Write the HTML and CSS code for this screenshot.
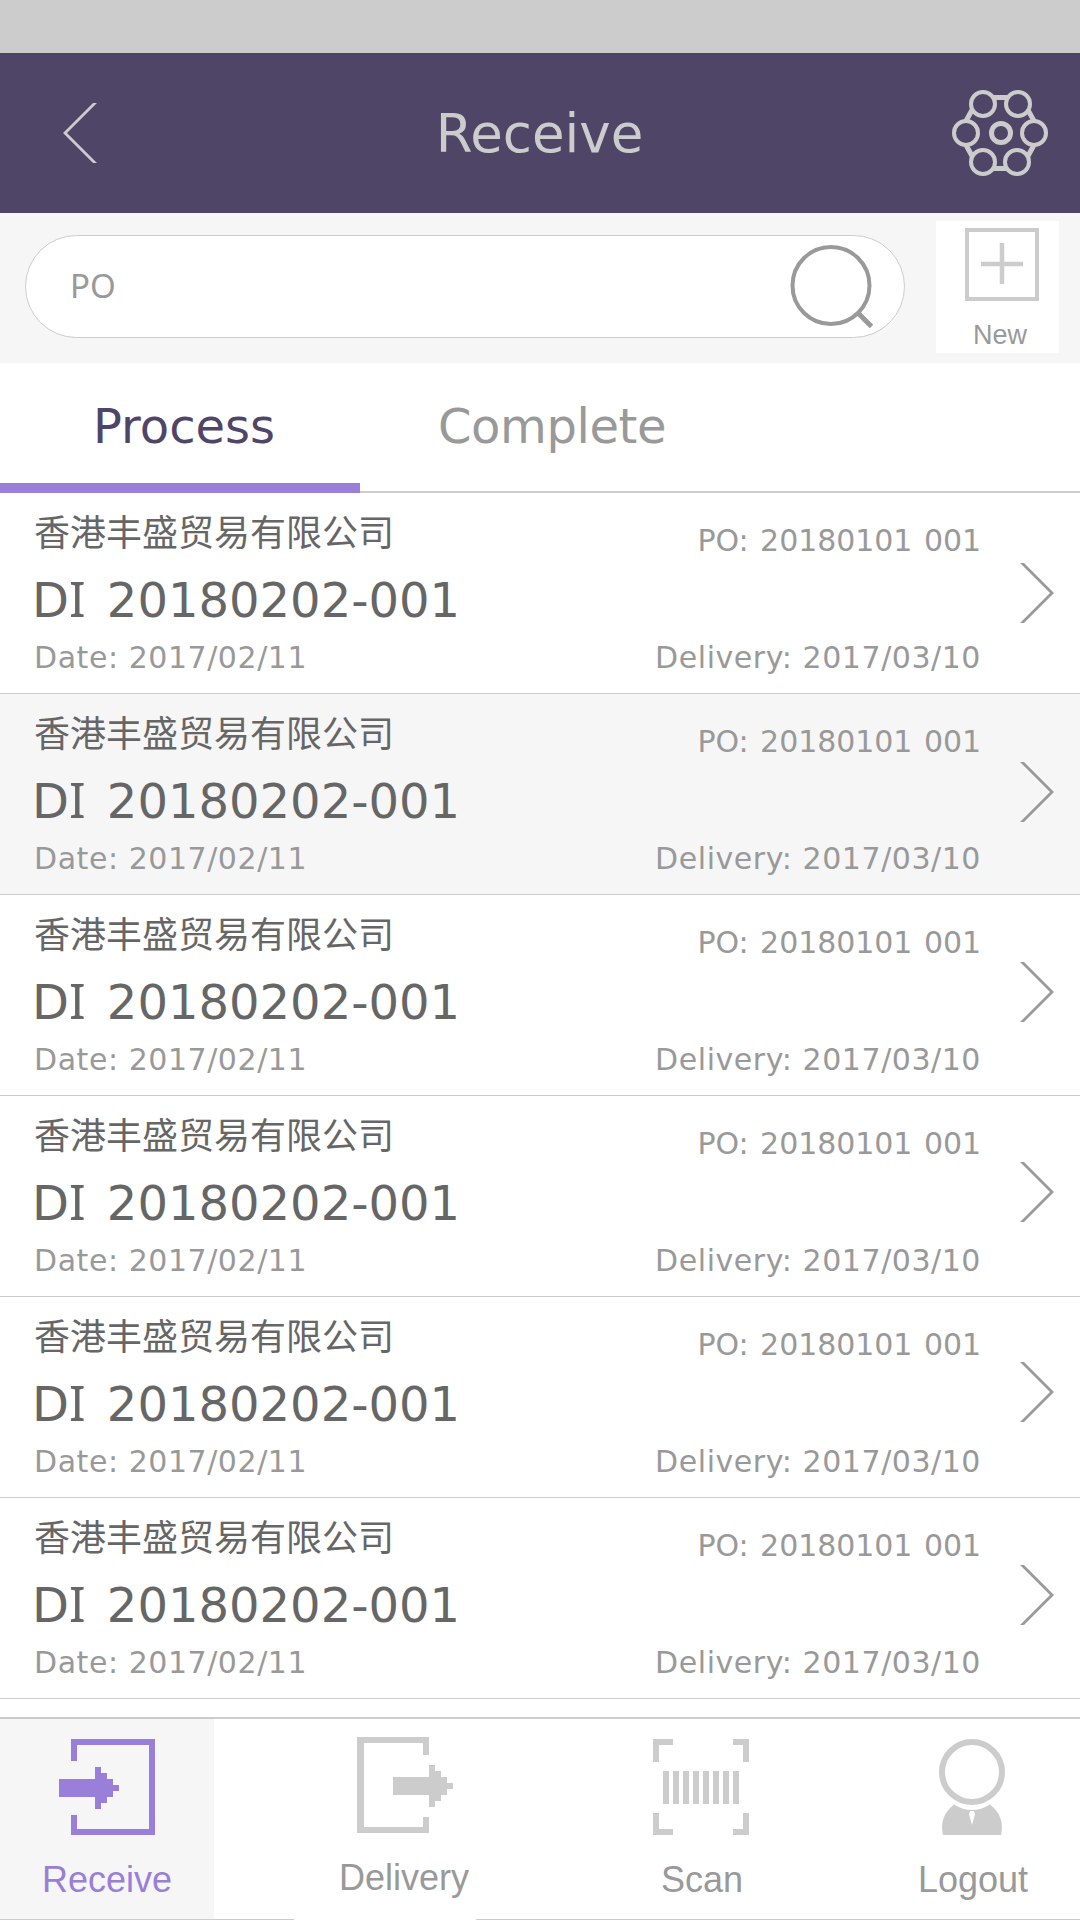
FILE: index.html
```html
<!DOCTYPE html>
<html lang="en">
<head>
  <meta charset="UTF-8" />
  <meta name="viewport" content="width=device-width, initial-scale=1.0">
  <title>Receive</title>
  <link rel="stylesheet" href="styles.css">
</head>
<body>
  <div class="status-bar"></div>

  <header class="header">
    <svg class="back" width="34" height="60" viewBox="0 0 34 60">
      <path d="M33 -1 L2 30 L33 61" />
    </svg>
    <h1>Receive</h1>
    <svg class="settings" width="96" height="86" viewBox="0 0 96 86">
      <path d="M41 7.500h14M76 20l6 11M82 55l-6 11M41 78.500h14M20 66l-6-11M14 31l6-11" stroke-width="5" />
      <circle cx="31" cy="14" r="12" />
      <circle cx="66" cy="14" r="12" />
      <circle cx="14" cy="43" r="12" />
      <circle cx="82" cy="43" r="12" />
      <circle cx="31" cy="72" r="12" />
      <circle cx="65" cy="72" r="12" />
      <circle cx="49" cy="43" r="9.500" stroke-width="5" />
    </svg>
  </header>

  <div class="search-row">
    <div class="search-box">
      <span>PO</span>
      <svg width="84" height="84" viewBox="0 0 84 84">
        <circle cx="41" cy="40.500" r="38.500" />
        <path d="M67 67 L81.500 81.500" stroke-width="5" />
      </svg>
    </div>
    <div class="new-btn">
      <svg width="74" height="74" viewBox="0 0 74 74">
        <path d="M2 2h70v69H2z" stroke-width="4" />
        <path d="M37 15v41M16 36h42" stroke-width="4.500" />
      </svg>
      <span>New</span>
    </div>
  </div>

  <div class="tabs">
    <div class="tab active"><span class="process">Process</span></div>
    <div class="tab"><span class="complete">Complete</span></div>
  </div>

  <div class="order-list" id="order-list"></div>

  <nav class="bottom-nav">
    <div class="nav-item receive active">
      <svg width="96" height="96" viewBox="0 0 96 96">
        <path d="M12 0h84v96H12V76h6v14h72V6H18v16h-6z" />
        <path d="M0 40h36V28h6v6h6v6h6v6h6v6h-6v6h-6v6h-6v6h-6V58H0z" />
      </svg>
      <span>Receive</span>
    </div>
    <div class="nav-item delivery">
      <svg width="96" height="96" viewBox="0 0 96 96">
        <path d="M0 0h72v18h-6V6H7v84h59V80h6v16H0z" />
        <path d="M36 40h36V28h6v6h6v6h6v6h6v6h-6v6h-6v6h-6v6h-6V58H36z" />
      </svg>
      <span>Delivery</span>
    </div>
    <div class="nav-item scan">
      <svg width="96" height="96" viewBox="0 0 96 96">
        <path d="M0 0h20v6H6v17H0zM80 0h16v23h-6V6H80zM0 74h6v16h14v6H0zM90 74h6v22H80v-6h10z" />
        <path d="M10 32h6v33h-6zM20 32h6v33h-6zM30 32h6v33h-6zM40 32h6v33h-6zM50 32h6v33h-6zM60 32h6v33h-6zM70 32h6v33h-6zM80 32h6v33h-6z" />
      </svg>
      <span>Scan</span>
    </div>
    <div class="nav-item logout">
      <svg width="66" height="96" viewBox="0 0 66 96">
        <circle cx="33" cy="33" r="30" fill="none" stroke="#ccc" stroke-width="6" />
        <path d="M15 65.500Q33 76.500 51 65.500C61 73 65 84 62 96H4C1 84 5 73 15 65.500z" />
        <path d="M31 72h4l1 3-3 11-3-11z" fill="#fff" />
      </svg>
      <span>Logout</span>
    </div>
  </nav>

  <script>
    const orders = [
      { company: '香港丰盛贸易有限公司', di: '20180202-001', po: '20180101 001', date: '2017/02/11', delivery: '2017/03/10' },
      { company: '香港丰盛贸易有限公司', di: '20180202-001', po: '20180101 001', date: '2017/02/11', delivery: '2017/03/10', selected: true },
      { company: '香港丰盛贸易有限公司', di: '20180202-001', po: '20180101 001', date: '2017/02/11', delivery: '2017/03/10' },
      { company: '香港丰盛贸易有限公司', di: '20180202-001', po: '20180101 001', date: '2017/02/11', delivery: '2017/03/10' },
      { company: '香港丰盛贸易有限公司', di: '20180202-001', po: '20180101 001', date: '2017/02/11', delivery: '2017/03/10' },
      { company: '香港丰盛贸易有限公司', di: '20180202-001', po: '20180101 001', date: '2017/02/11', delivery: '2017/03/10' }
    ];

    const list = document.getElementById('order-list');
    for (const o of orders) {
      const div = document.createElement('div');
      div.className = o.selected ? 'order selected' : 'order';
      div.innerHTML = `
        <div class="order-left">
          <div class="company">${o.company}</div>
          <div class="di">D<span class="serif-i">I</span> ${o.di}</div>
          <div class="small date">Date: ${o.date}</div>
        </div>
        <div class="order-right">
          <div class="small po">PO: ${o.po}</div>
          <div class="small date">Delivery: ${o.delivery}</div>
        </div>
        <svg class="arrow" width="34" height="60" viewBox="0 0 34 60">
          <path d="M1 -1 L32 30 L1 61" />
        </svg>
      `;
      list.appendChild(div);
    }
  </script>
</body>
</html>
```

FILE: styles.css
```css
* {
  box-sizing: border-box;
}
body {
  margin: 0;
  width: 1080px;
  height: 1920px;
  overflow: hidden;
  display: flex;
  flex-direction: column;
  background: #fff;
  color: #999;
  font-family: "DejaVu Sans", "Noto Sans CJK SC", sans-serif;
}
svg {
  display: block;
  flex: none;
}
.status-bar {
  height: 53px;
  background: #ccc;
}
.header {
  height: 160px;
  background: #4f4567;
  color: #ccc;
  display: flex;
  align-items: center;
  justify-content: space-between;
  padding: 0 32px 0 63px;
}
.header svg {
  fill: none;
  stroke: #ccc;
  stroke-width: 4;
}
.header .back {
  stroke-width: 2.8;
}
h1 {
  margin: 2px 0 0 30px;
  font-size: 53px;
  font-weight: normal;
  line-height: 60px;
}
.search-row {
  height: 150px;
  background: #f6f6f6;
  display: flex;
  padding: 8px 21px 0 25px;
  justify-content: space-between;
}
.search-box {
  width: 880px;
  height: 103px;
  margin-top: 14px;
  border: 1px solid #ccc;
  border-radius: 52px;
  background: #fff;
  display: flex;
  justify-content: space-between;
  padding: 9px 30px 0 44px;
}
.search-box span {
  font-family: "Noto Sans", sans-serif;
  font-size: 33px;
  line-height: 82px;
}
.search-box svg {
  fill: none;
  stroke: #999;
  stroke-width: 4;
}
.new-btn {
  width: 123px;
  height: 132px;
  background: #fff;
  display: flex;
  flex-direction: column;
  align-items: center;
  padding: 7px 0 0 8px;
}
.new-btn svg {
  fill: none;
  stroke: #ccc;
}
.new-btn span {
  font-family: "Liberation Sans", sans-serif;
  font-size: 27px;
  line-height: 30px;
  margin: 18px 3px 0 0;
}
.tabs {
  height: 130px;
  border-bottom: 2px solid #ccc;
  display: flex;
}
.tab {
  width: 360px;
  height: 130px;
  padding-top: 33px;
  font-size: 48px;
  line-height: 60px;
  white-space: nowrap;
}
.tab.active {
  color: #4f4567;
  border-bottom: 10px solid #997fd9;
}
.process {
  margin-left: 93px;
}
.complete {
  margin-left: 78px;
  letter-spacing: -0.4px;
}
.order-list {
  height: 1224px;
}
.order {
  height: 201px;
  border-bottom: 1px solid #ccc;
  display: flex;
  padding-left: 34px;
}
.order.selected {
  background: #f6f6f6;
}
.order-left {
  width: 500px;
}
.company {
  font-family: "Noto Sans CJK SC", sans-serif;
  font-size: 36px;
  line-height: 50px;
  margin-top: 12px;
  color: #666;
}
.di {
  font-size: 48px;
  line-height: 60px;
  margin: 15px 0 0 -2px;
  word-spacing: 6px;
  color: #666;
}
.serif-i {
  font-family: "Noto Sans", sans-serif;
  font-size: 49px;
  line-height: 1;
}
.small {
  font-size: 30px;
  line-height: 36px;
}
.date {
  letter-spacing: 0.55px;
}
.po {
  word-spacing: 2px;
  letter-spacing: -0.05px;
}
.order-left .small {
  margin-top: 10px;
}
.order-right {
  width: 447px;
  text-align: right;
  padding-top: 30px;
}
.order-right .small + .small {
  margin-top: 81px;
}
.arrow {
  margin: 70px 0 0 39px;
  fill: none;
  stroke: #999;
  stroke-width: 2.8;
}
.order:nth-child(2) .arrow {
  margin-top: 68px;
}
.order:nth-child(3) .arrow,
.order:nth-child(6) .arrow {
  margin-top: 67px;
}
.order:nth-child(4) .arrow {
  margin-top: 66px;
}
.order:nth-child(5) .arrow {
  margin-top: 65px;
}
.bottom-nav {
  height: 203px;
  border-top: 2px solid #ccc;
  border-bottom: 1px solid #ccc;
  display: flex;
}
.nav-item {
  display: flex;
  flex-direction: column;
  padding-top: 20px;
  font-family: "Liberation Sans", sans-serif;
  font-size: 36px;
  line-height: 42px;
  fill: #ccc;
}
.nav-item span {
  margin-top: 24px;
}
.nav-item.active {
  background: #f6f6f6;
  color: #997fd9;
  fill: #997fd9;
}
.receive {
  width: 214px;
  padding-left: 42px;
}
.receive svg {
  margin-left: 17px;
}
.delivery {
  width: 182px;
  height: 201px;
  margin-left: 80px;
  padding: 18px 0 0 45px;
  background: #fff;
}
.delivery svg {
  margin-left: 18px;
}
.scan {
  width: 280px;
  padding-left: 185px;
}
.scan svg {
  margin-left: -8px;
}
.logout {
  padding-left: 162px;
}
.logout svg {
  margin-left: 21px;
}
```
